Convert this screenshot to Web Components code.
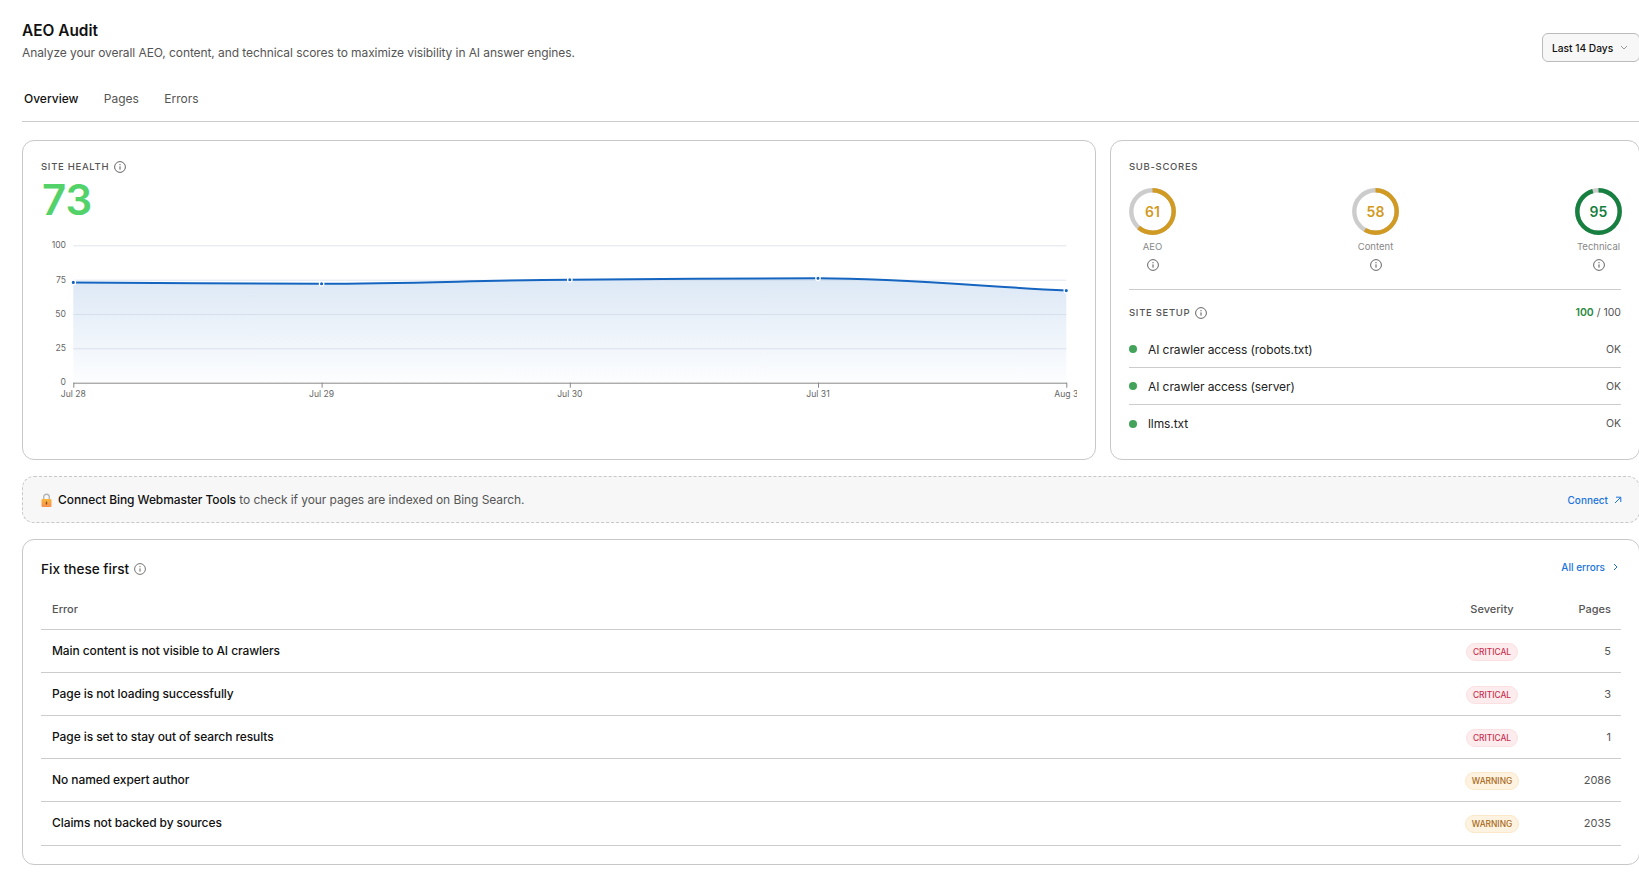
<!DOCTYPE html>
<html lang="en">
<head>
<meta charset="utf-8">
<title>AEO Audit</title>
<style>
html,body{margin:0;padding:0;background:#fff;overflow:hidden;height:893px}
body{font-family:Inter,"Liberation Sans",sans-serif;color:#111}
</style>
</head>
<body>
<aeo-app></aeo-app>
<script>
const INFO=(s=12,c='#555')=>`<svg width="${s}" height="${s}" viewBox="0 0 12 12" fill="none" style="display:block;flex:none"><circle cx="6" cy="6" r="5.4" stroke="${c}" stroke-width=".9"/><path d="M6 5.4V8.6" stroke="${c}" stroke-width="1"/><circle cx="6" cy="3.7" r=".6" fill="${c}"/></svg>`;
function def(name,css,render){
  customElements.define(name,class extends HTMLElement{
    connectedCallback(){
      if(this.shadowRoot)return;
      const r=this.attachShadow({mode:'open'});
      r.innerHTML=`<style>${css}</style>`+render(this);
    }
  });
}
def('info-icon',':host{display:inline-flex}',el=>INFO(+el.getAttribute('size')||12,el.getAttribute('color')||'#555'));

def('page-header',`
:host{display:flex;justify-content:space-between;align-items:flex-start;padding-top:21px}
h1{margin:0;font-size:15.4px;line-height:19px;font-weight:600;color:#111}
p{margin:4px 0 0;font-size:12px;line-height:17px;color:#555;letter-spacing:-.085px}
button{font:500 10.2px Inter,sans-serif;color:#111;background:#f7f7f7;border:1px solid #bbb;border-radius:6px;width:98px;height:29px;margin-top:12px;padding:0 0 0 9px;display:flex;align-items:center;gap:7px;box-sizing:border-box}
svg{flex:none}
`,()=>`<div><h1>AEO Audit</h1><p>Analyze your overall AEO, content, and technical scores to maximize visibility in AI answer engines.</p></div>
<button>Last 14 Days<svg width="8" height="5" viewBox="0 0 8 5" fill="none"><path d="M1 1l3 3 3-3" stroke="#999" stroke-width="1"/></svg></button>`);

def('tab-bar',`
:host{display:flex;gap:25.4px;padding:0 0 0 2px;margin-top:28px;height:31px;border-bottom:1px solid #ccc;font-size:12px;line-height:17px;color:#555}
.on{color:#111;font-weight:500}
`,()=>`<span class="on">Overview</span><span>Pages</span><span>Errors</span>`);

def('ui-card',`
:host{display:block;box-sizing:border-box;border:1px solid #c8c8c8;border-radius:12px;background:#fff;padding:18px}
`,()=>`<slot></slot>`);

def('section-label',`
:host{display:flex;align-items:center;gap:5px;font-size:9.5px;line-height:14px;letter-spacing:.7px;font-weight:500;color:#555;text-transform:uppercase}
`,()=>`<slot></slot>`);

def('health-chart',`
:host{display:block;height:170px}
svg{display:block;overflow:hidden;font-family:Inter,sans-serif}
text{font-size:8.6px;fill:#666}
`,()=>{
  const X0=32.3,DX=248.25,top=10.3,bot=147.7;
  const Y=v=>+(bot-(bot-top)*v/100).toFixed(1);
  const xs=[0,1,2,3,4].map(i=>+(X0+DX*i).toFixed(1));
  const ys=[73,72,75,76,67].map(Y);
  const line=`M${xs[0]} ${ys[0]}C${xs[0]+83} ${ys[0]+.6} ${xs[1]-83} ${ys[1]} ${xs[1]} ${ys[1]}C${xs[1]+83} ${ys[1]} ${xs[2]-83} ${ys[2]+.6} ${xs[2]} ${ys[2]}C${xs[2]+83} ${ys[2]-.6} ${xs[3]-83} ${ys[3]} ${xs[3]} ${ys[3]}C${xs[3]+83} ${ys[3]} ${xs[4]-83} ${ys[4]-4} ${xs[4]} ${ys[4]}`;
  let g='';
  [100,75,50,25].forEach(v=>{g+=`<line x1="${X0}" x2="${xs[4]}" y1="${Y(v)+.5}" y2="${Y(v)+.5}" stroke="#c9d3e2" stroke-opacity=".6"/>`});
  let labels='';
  [[100,Y(100)],[75,Y(75)],[50,Y(50)],[25,Y(25)],[0,bot-1]].forEach(([v,y])=>{labels+=`<text x="25" y="${y+3}" text-anchor="end">${v}</text>`});
  const names=['Jul 28','Jul 29','Jul 30','Jul 31','Aug 3'];
  let ticks='',dots='';
  xs.forEach((x,i)=>{
    ticks+=`<line x1="${x+.5}" x2="${x+.5}" y1="${bot}" y2="${bot+5}" stroke="#888"/><text x="${x}" y="${bot+14}" text-anchor="middle">${names[i]}</text>`;
    dots+=`<circle cx="${x}" cy="${ys[i]}" r="2.2" fill="#1565c0" stroke="#fff" stroke-width="1.3"/>`;
  });
  return `<svg width="1036" height="170" viewBox="0 0 1036 170">
  <defs><linearGradient id="a" x1="0" y1="0" x2="0" y2="1"><stop offset="0" stop-color="#1565c0" stop-opacity=".15"/><stop offset="1" stop-color="#1565c0" stop-opacity=".01"/></linearGradient></defs>
  ${labels}
  <path d="${line}L${xs[4]} ${bot}L${xs[0]} ${bot}Z" fill="url(#a)"/>
  ${g}
  <line x1="${X0}" x2="${xs[4]+.5}" y1="${bot+.5}" y2="${bot+.5}" stroke="#888"/>
  ${ticks}
  <path d="${line}" fill="none" stroke="#1565c0" stroke-width="2"/>
  ${dots}
  </svg>`;
});

def('score-ring',`
:host{display:flex;flex-direction:column;align-items:center;width:47px}
.r{position:relative;width:47px;height:47px}
svg{display:block}
b{position:absolute;inset:0;display:flex;align-items:center;justify-content:center;font-size:14px;font-weight:600}
span{font-size:9.5px;line-height:12px;color:#888;margin-top:6px;white-space:nowrap}
info-icon{margin-top:6px}
`,el=>{
  const v=+el.getAttribute('value'),c=el.getAttribute('color'),r=21.2,C=2*Math.PI*r;
  return `<div class="r"><svg width="47" height="47" viewBox="0 0 47 47" fill="none"><circle cx="23.5" cy="23.5" r="${r}" stroke="#ccc" stroke-width="4.4"/><circle cx="23.5" cy="23.5" r="${r}" stroke="${c}" stroke-width="4.4" stroke-dasharray="${C*v/100} ${C}" transform="rotate(-90 23.5 23.5)"/></svg><b style="color:${c}">${v}</b></div><span>${el.getAttribute('label')}</span><info-icon></info-icon>`;
});

def('setup-row',`
:host{display:flex;align-items:center;height:37px;box-sizing:border-box;font-size:12px;color:#222;letter-spacing:-.085px}
:host(:not(:last-child)){border-bottom:1px solid #ccc}
i{width:8px;height:8px;border-radius:50%;background:#43a35a;margin-right:11px;flex:none}
span{flex:1}
em{font-style:normal;font-size:10.5px;color:#555;letter-spacing:0}
`,el=>`<i></i><span><slot></slot></span><em>OK</em>`);

def('connect-banner',`
:host{display:flex;align-items:center;justify-content:space-between;box-sizing:border-box;height:47px;border:1px dashed #c8c8c8;border-radius:12px;background:#f7f7f7;padding:0 17px;font-size:12px;color:#555;letter-spacing:-.075px}
.l{display:flex;align-items:center}
svg{display:block;flex:none}
b{font-weight:500;color:#111}
a{display:flex;align-items:center;gap:6px;font-size:10px;font-weight:500;color:#1a73d9;letter-spacing:0}
`,()=>`<div class="l"><svg width="11" height="14" viewBox="0 0 11 14" style="margin:0 6px 0 1px"><defs><linearGradient id="l" x1="0" y1="0" x2="0" y2="1"><stop offset="0" stop-color="#f9b63a"/><stop offset="1" stop-color="#f78f52"/></linearGradient></defs><path d="M2.7 6.5V4a2.8 2.8 0 015.6 0v2.5" fill="none" stroke="#b4b4b4" stroke-width="1.4"/><rect x=".5" y="6" width="10" height="8" rx="1" fill="url(#l)"/><rect x="4.8" y="8.4" width="1.4" height="3.2" rx=".7" fill="#8a4a1a"/></svg><span><b>Connect Bing Webmaster Tools</b> to check if your pages are indexed on Bing Search.</span></div>
<a>Connect<svg width="8" height="8" viewBox="0 0 8 8" fill="none"><path d="M1 7l5.5-5.5M2 1.2h4.8V6" stroke="#1a73d9" stroke-width="1"/></svg></a>`);

def('error-row',`
:host{display:grid;grid-template-columns:1fr 104px 77px;align-items:center;height:43px;box-sizing:border-box;border-bottom:1px solid #ccc;padding-left:11px;font-size:12px;font-weight:500;color:#111;letter-spacing:-.085px}
:host(:last-child){height:44px}
.n{padding-bottom:2px}
.s{display:flex;justify-content:center;padding-top:1px}
.p{text-align:right;padding-right:10px;font-size:11px;font-weight:400;color:#555;letter-spacing:0;padding-bottom:1px}
.b{font-size:8.4px;line-height:16px;font-weight:500;border-radius:9px;padding:0 6px;border:1px solid;letter-spacing:0}
.critical{color:#c9304d;background:#fdeced;border-color:#fbe0e2}
.warning{color:#a8681a;background:#fef3e0;border-color:#fbe8c8}
`,el=>{const s=el.getAttribute('severity');return `<span class="n"><slot></slot></span><div class="s"><span class="b ${s}">${s.toUpperCase()}</span></div><div class="p">${el.getAttribute('pages')}</div>`});

def('errors-table',`
:host{display:block}
.top{display:flex;justify-content:space-between;align-items:center;height:20px}
.t{display:flex;align-items:center;gap:5px;font-size:13.6px;font-weight:500;color:#111;margin-top:1px}
a{display:flex;align-items:center;gap:8px;font-size:10px;font-weight:500;color:#1a73d9;margin-top:-3px;padding-right:3px}
.h{display:grid;grid-template-columns:1fr 104px 77px;align-items:center;height:41px;margin-top:11px;box-sizing:border-box;border-bottom:1px solid #ccc;padding-left:11px;font-size:11px;color:#555;font-weight:500}
.h div:nth-child(2){text-align:center}
.h div:nth-child(3){text-align:right;padding-right:10px}
`,()=>`<div class="top"><div class="t">Fix these first <info-icon color="#666"></info-icon></div><a>All errors<svg width="5" height="8" viewBox="0 0 5 8" fill="none"><path d="M1 1l3 3-3 3" stroke="#1a73d9" stroke-width="1"/></svg></a></div>
<div class="h"><div>Error</div><div>Severity</div><div>Pages</div></div><slot></slot>`);

def('aeo-app',`
:host{display:block;width:1618px;padding-left:22px;font-family:Inter,"Liberation Sans",sans-serif}
.top{display:grid;grid-template-columns:1074px 530px;column-gap:14px;margin-top:18px}
ui-card{height:320px}
.big{font-size:42px;line-height:46px;font-weight:600;color:#52d268;margin:3px 0 0 1px}
section-label.a{margin-top:1px}
health-chart{margin-top:12px}
.subs{display:flex;justify-content:space-between;margin-top:14px;margin-right:-1px}
hr{border:0;border-top:1px solid #ccc;margin:18px 0 0}
.ss{display:flex;justify-content:space-between;align-items:center;margin-top:16px;margin-bottom:11px}
.sc{font-size:10.5px;color:#555;margin-top:-2px}
.sc b{color:#2c8a3f;font-weight:600}
connect-banner{margin-top:16px}
.fix{margin-top:16px;height:326px}
`,()=>`<page-header></page-header><tab-bar></tab-bar>
<div class="top">
<ui-card><section-label class="a">Site Health <info-icon></info-icon></section-label><div class="big">73</div><health-chart></health-chart></ui-card>
<ui-card><section-label class="a">Sub-scores</section-label>
<div class="subs"><score-ring value="61" label="AEO" color="#d19a23"></score-ring><score-ring value="58" label="Content" color="#d19a23"></score-ring><score-ring value="95" label="Technical" color="#178040"></score-ring></div>
<hr>
<div class="ss"><section-label>Site Setup <info-icon></info-icon></section-label><div class="sc"><b>100</b> / 100</div></div>
<setup-row>AI crawler access (robots.txt)</setup-row><setup-row>AI crawler access (server)</setup-row><setup-row>llms.txt</setup-row>
</ui-card></div>
<connect-banner></connect-banner>
<ui-card class="fix"><errors-table>
<error-row severity="critical" pages="5">Main content is not visible to AI crawlers</error-row>
<error-row severity="critical" pages="3">Page is not loading successfully</error-row>
<error-row severity="critical" pages="1">Page is set to stay out of search results</error-row>
<error-row severity="warning" pages="2086">No named expert author</error-row>
<error-row severity="warning" pages="2035">Claims not backed by sources</error-row>
</errors-table></ui-card>`);
</script>
</body>
</html>
